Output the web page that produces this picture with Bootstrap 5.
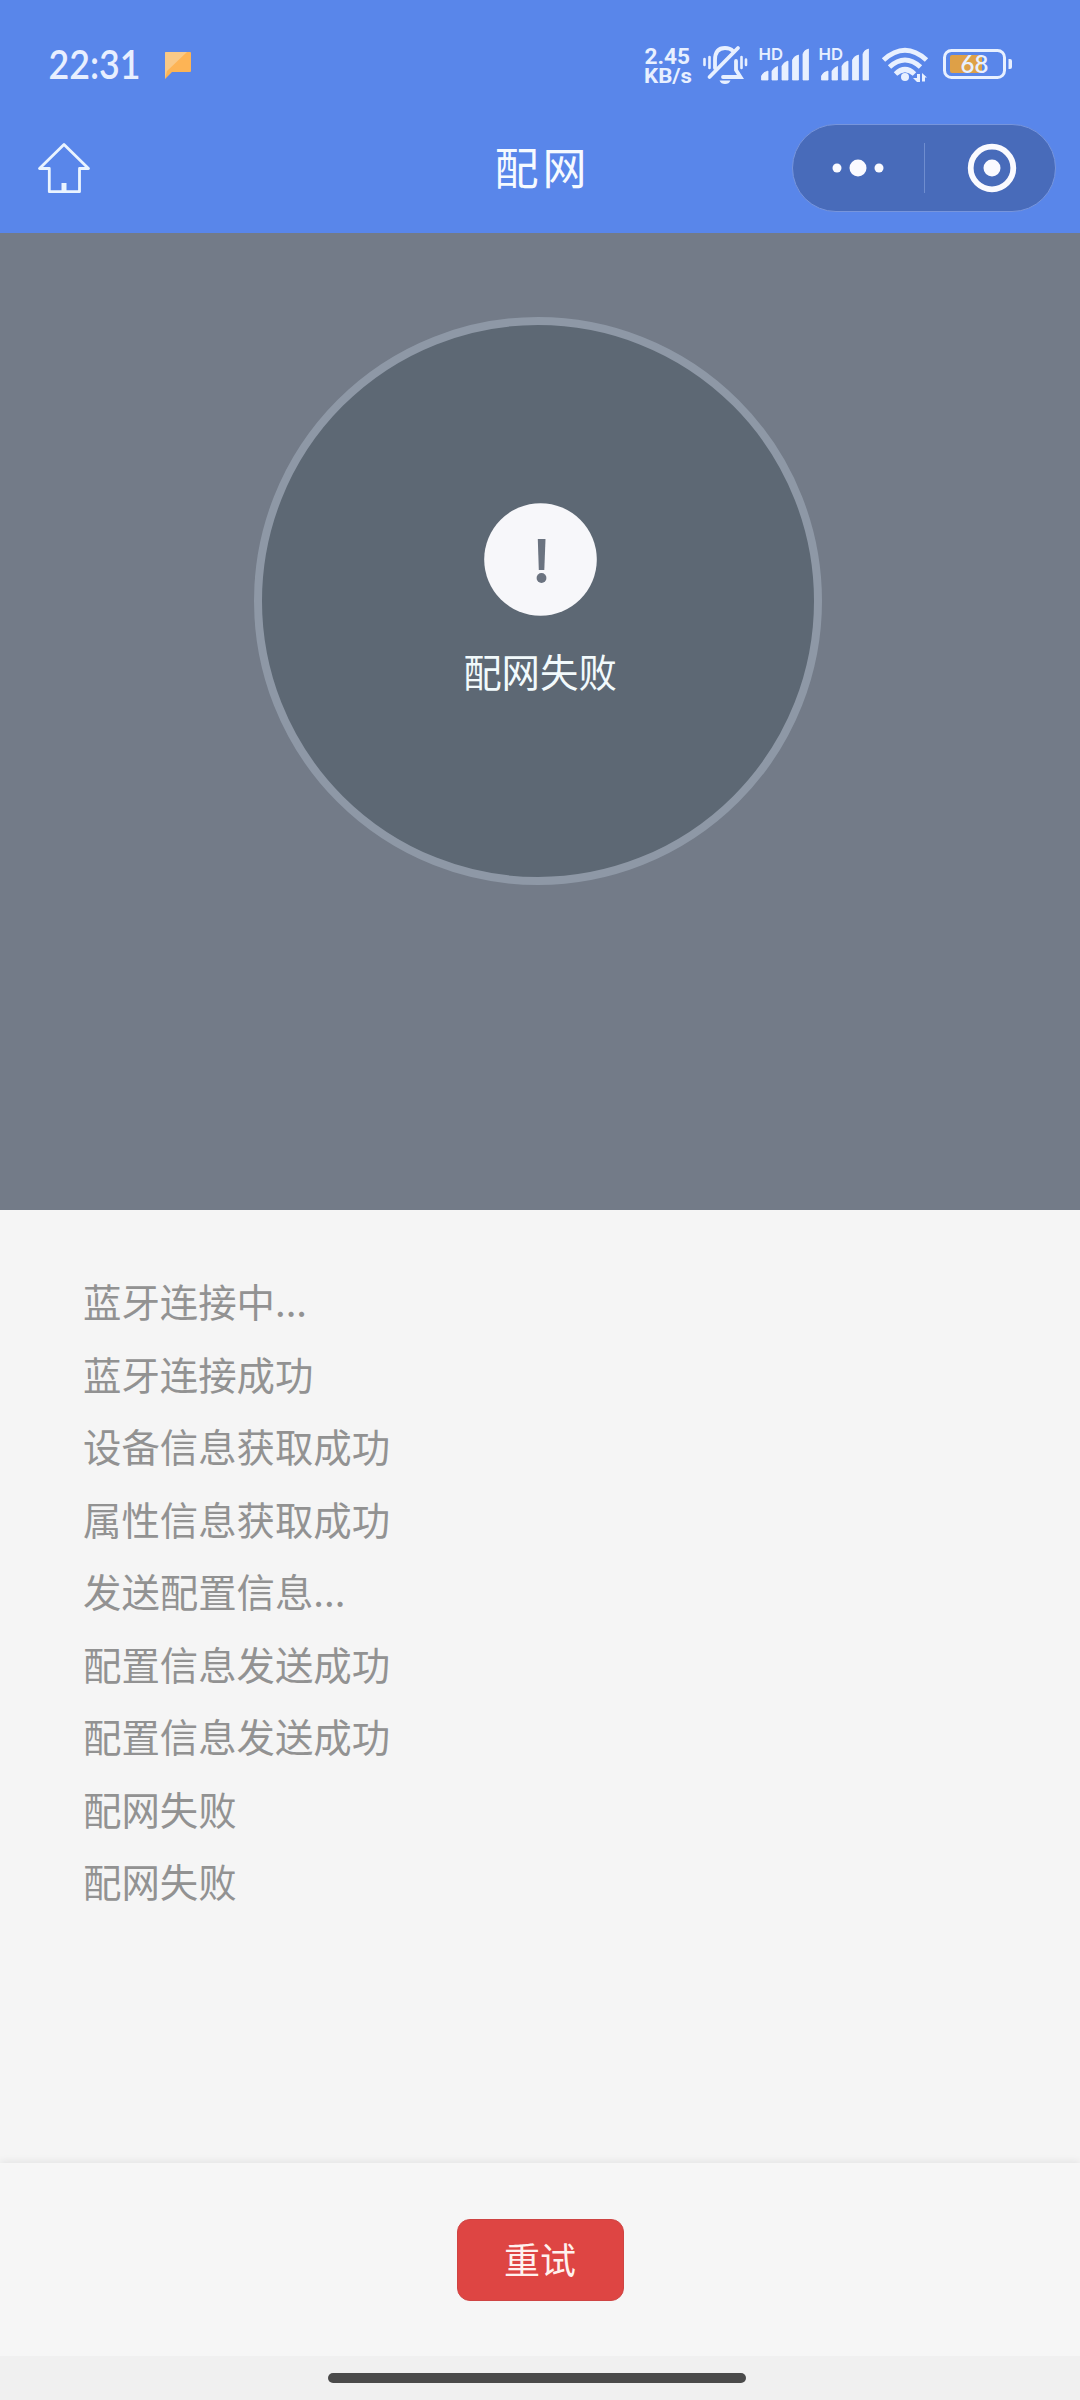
<!DOCTYPE html>
<html lang="zh-CN">
<head>
<meta charset="utf-8">
<meta name="viewport" content="width=device-width, initial-scale=1">
<title>配网</title>
<link href="https://cdn.jsdelivr.net/npm/bootstrap@5.3.0/dist/css/bootstrap.min.css" rel="stylesheet">
<style>
  body { font-family: "Noto Sans CJK SC", sans-serif; background: #f5f5f5; height: 2400px; overflow: hidden; }
  svg { display: block; flex: none; overflow: visible; }
  .app-head { height: 233px; background: #5986ea; flex: none; }
  .status-bar { height: 104px; padding: 24px 68px 0 48px; }
  .title-bar { height: 129px; padding: 0 24px 0 36px; }
  .title-side { width: 257px; }
  .page-title { font-size: 44px; line-height: 60px; letter-spacing: 4px; color: #f6faff; padding-top: 32px; }
  .capsule { width: 264px; height: 88px; margin-top: 20px; background: #486bba; border: 1px solid #7795dc; }
  .capsule-cell { flex: 1; height: 50px; }
  .capsule-cell + .capsule-cell { border-left: 1px solid #6f8dcf; }
  .hero { height: 977px; background: #737b88; padding-top: 84px; padding-right: 4px; flex: none; }
  .dial { width: 568px; height: 568px; border: 8px solid #8e98a6; background: #5d6874; padding: 178px 0 0 4px; }
  .dial-text { font-size: 38.4px; line-height: 56px; margin-top: 26px; color: #f2fafc; }
  .logs { padding: 54px 82px 0 83px; font-size: 38.4px; line-height: 72.5px; color: #929292; }
  .foot { height: 193px; background: #f6f6f6; box-shadow: 0 -2px 7px rgba(0,0,0,.07); flex: none; }
  .btn-retry { width: 167px; height: 82px; padding: 0 0 3px; border-radius: 13px; font-size: 36px; line-height: 76px; background: #de4543; border: 1px solid #cf4442; color: #fff1ee; }
  .gesture { height: 44px; background: #f0f0f0; padding: 17px 6px 0 0; flex: none; }
  .gesture-line { width: 418px; height: 10px; background: #4a4a4a; }
</style>
</head>
<body class="d-flex flex-column">
<header class="app-head">
  <div class="status-bar d-flex justify-content-between">
    <svg width="146" height="80" viewBox="48 24 146 80">
      <text x="48.500" y="78.500" font-family="Lato, sans-serif" font-weight="600" font-size="40" textLength="92" lengthAdjust="spacingAndGlyphs" fill="#e8efff">22:31</text>
      <path d="M166 52H190Q191 52 191 53V71Q191 72 190 72H172L165 79V53Q165 52 166 52Z" fill="#fdb455"/>
      <path d="M166 52H187L167 71L165 79V53Q165 52 166 52Z" fill="#f9c987"/>
    </svg>
    <svg width="372" height="80" viewBox="640 24 372 80" fill="#e8f0ff">
      <g font-family="Roboto, sans-serif" font-weight="700">
        <text x="644.500" y="64" font-size="22" textLength="45.500" lengthAdjust="spacingAndGlyphs">2.45</text>
        <text x="644" y="82.500" font-size="21" textLength="48" lengthAdjust="spacingAndGlyphs">KB/s</text>
      </g>
      <!-- silent bell -->
      <g fill="none" stroke="#e8f0ff" stroke-width="3.800" stroke-linecap="round">
        <path d="M715 68V60Q715 48 725 48Q730 48 733 51"/>
        <path d="M736 61V70L740.500 77H723"/>
        <path d="M709.500 77L738 48"/>
        <path d="M704.500 59V65M709.500 57V68M741.500 57V68M746 59.500V65" stroke-width="2.600"/>
      </g>
      <path d="M719.500 80.500H730.500Q729 84 725 84T719.500 80.500Z"/>
      <g id="signal">
        <text x="758.500" y="60.300" font-family="Inter, sans-serif" font-weight="600" font-size="16.500" textLength="24.500" lengthAdjust="spacingAndGlyphs">HD</text>
        <path d="M761.500 80V76Q763 72 768 71V80ZM772 80V71Q774 67.500 777.500 66.500V80ZM782 80V66Q784 62 788 61V80ZM792.500 80V60Q794 56 798.500 55V80ZM803 80V54Q804 50 808.500 49V80Z" stroke="#e8f0ff" stroke-width=".8" stroke-linejoin="round"/>
      </g>
      <use href="#signal" x="60"/>
      <!-- wifi -->
      <g fill="none" stroke="#e8f0ff" stroke-width="5">
        <path d="M883.500 60Q905 40.500 926.500 60"/>
        <path d="M889.500 67Q905 53 920.500 67"/>
        <path d="M895.500 74Q905 65 914.500 74"/>
      </g>
      <circle cx="905" cy="77" r="4"/>
      <path d="M917 74H920V82H917L913 78H917ZM922 81.500V73L927 77.500H925V81.500Z"/>
      <!-- battery -->
      <rect x="944.500" y="50.500" width="60" height="27" rx="7" fill="none" stroke="#e8f0ff" stroke-width="3"/>
      <rect x="950" y="55" width="32" height="18" rx="2" fill="#dea047"/>
      <path d="M1008.500 59H1010Q1012 59 1012 61V67Q1012 69 1010 69H1008.500Z"/>
      <text x="960.500" y="73" font-family="Lato, sans-serif" font-weight="600" font-size="24" textLength="28">68</text>
    </svg>
  </div>
  <nav class="title-bar d-flex justify-content-between" aria-label="导航">
    <div class="title-side">
      <svg width="56" height="128" viewBox="36 104 56 128" fill="none" stroke="#eaf4ff" stroke-width="2.800" stroke-linejoin="round">
        <path d="M64 144.500L39.500 168.500H49.300V191.700H79.500V168.500H88.500Z"/>
        <path d="M64 183V191" stroke-width="5"/>
      </svg>
    </div>
    <div class="page-title">配网</div>
    <div class="capsule rounded-pill d-flex align-items-center">
      <div class="capsule-cell d-flex align-items-center justify-content-center">
        <svg width="52" height="18" fill="#fafaff"><circle cx="5" cy="9" r="4.500"/><circle cx="26" cy="9" r="8.500"/><circle cx="47" cy="9" r="4.500"/></svg>
      </div>
      <div class="capsule-cell d-flex align-items-center justify-content-center">
        <svg width="44" height="50"><circle cx="24" cy="25" r="21.300" fill="none" stroke="#fafaff" stroke-width="5.800"/><circle cx="24" cy="25" r="8.500" fill="#fafaff"/></svg>
      </div>
    </div>
  </nav>
</header>
<section class="hero d-flex justify-content-center align-items-start">
  <div class="dial rounded-circle d-flex flex-column align-items-center">
    <svg width="113" height="113" viewBox="0 0 113 113">
      <circle cx="56.500" cy="56.500" r="56.300" fill="#f7f7fa"/>
      <path d="M53.800 36H61.500L60.300 67H54.800Z" fill="#6b7380"/><circle cx="57.500" cy="75" r="4.900" fill="#6b7380"/>
    </svg>
    <div class="dial-text">配网失败</div>
  </div>
</section>
<main class="flex-grow-1">
  <ul class="logs list-unstyled mb-0">
    <li>蓝牙连接中...</li>
    <li>蓝牙连接成功</li>
    <li>设备信息获取成功</li>
    <li>属性信息获取成功</li>
    <li>发送配置信息...</li>
    <li>配置信息发送成功</li>
    <li>配置信息发送成功</li>
    <li>配网失败</li>
    <li>配网失败</li>
  </ul>
</main>
<footer class="foot d-flex justify-content-center align-items-center">
  <button type="button" class="btn btn-danger btn-retry">重试</button>
</footer>
<div class="gesture d-flex justify-content-center"><div class="gesture-line rounded-pill"></div></div>
<script src="https://cdn.jsdelivr.net/npm/bootstrap@5.3.0/dist/js/bootstrap.bundle.min.js"></script>
</body>
</html>
